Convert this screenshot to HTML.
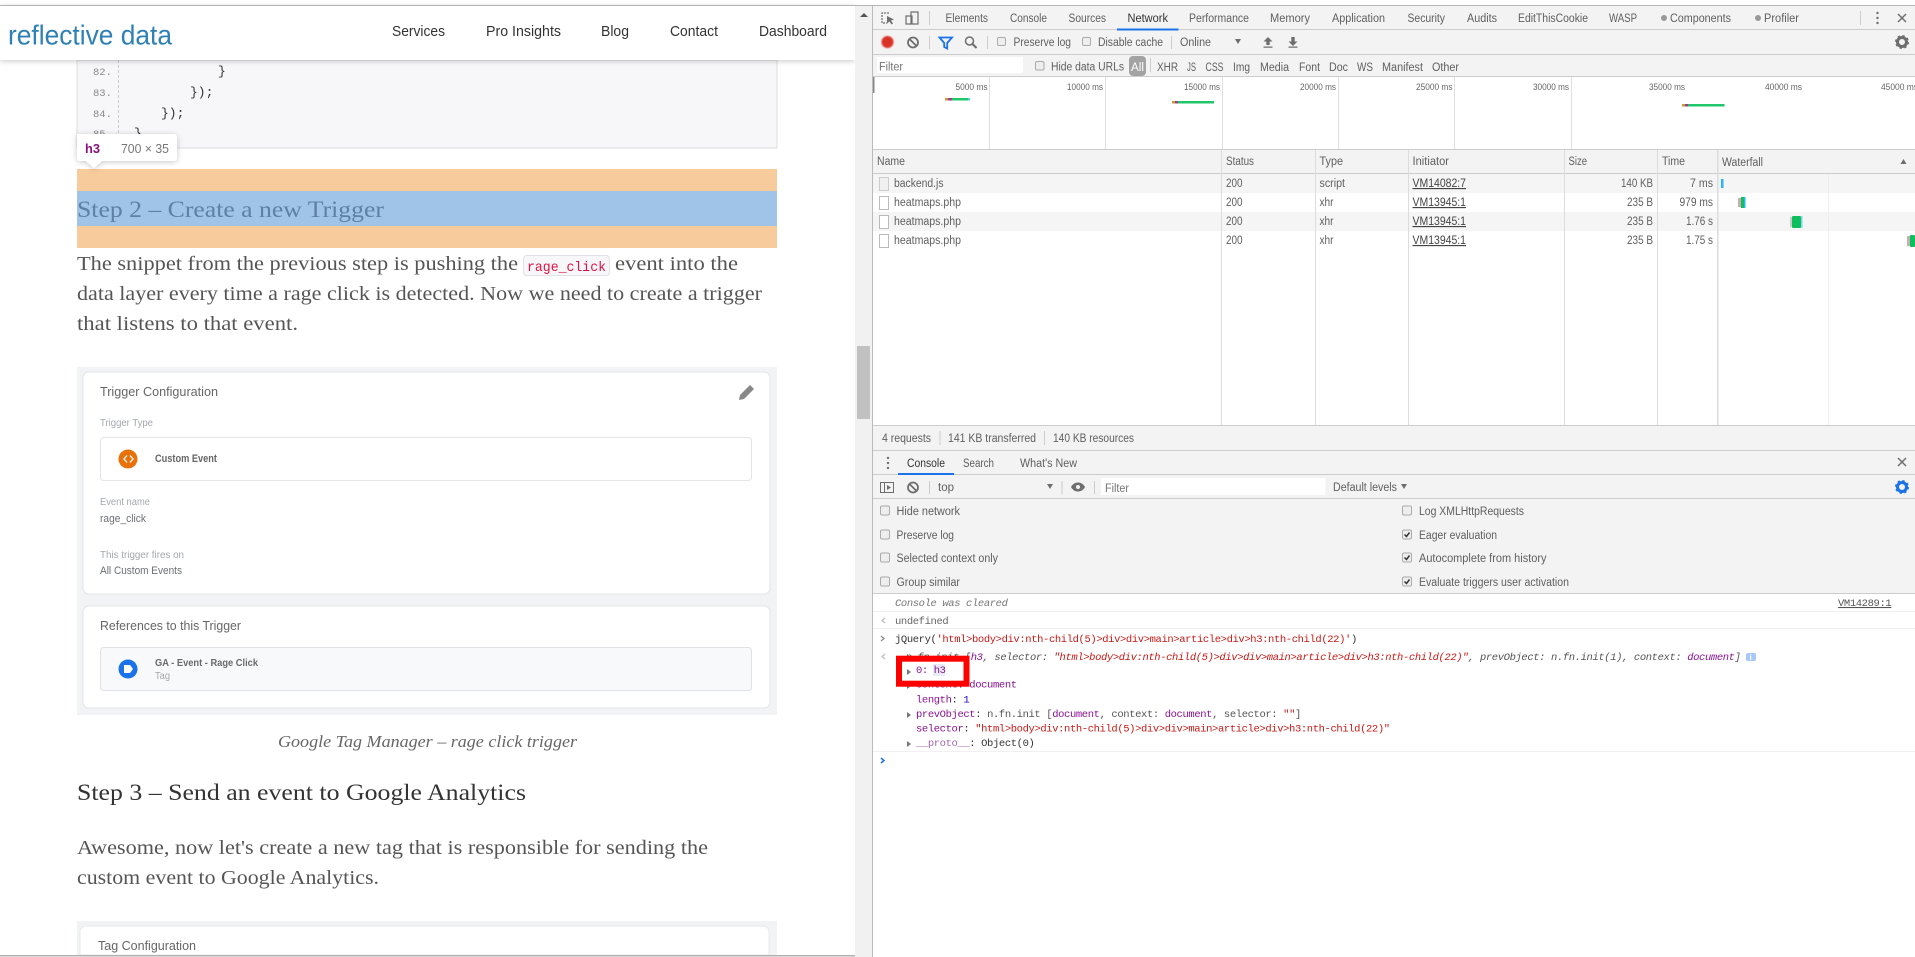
<!DOCTYPE html>
<html><head><meta charset="utf-8"><title>Reflective Data</title>
<style>
html,body{margin:0;padding:0;background:#fff;overflow:hidden}
svg{display:block;font-family:"Liberation Sans",sans-serif;filter:blur(.25px)}
.d{font-size:11.5px;fill:#5f5f5f}
.o{font-size:9.5px;fill:#666}
.s{font-family:"Liberation Serif",serif}
.p{font-family:"Liberation Serif",serif;font-size:20px;fill:#555}
.c{font-size:10px;fill:#a4a8ad}
.e{font-size:11px;fill:#6a6e72}
.m{font-family:"Liberation Mono",monospace;font-size:10.5px;letter-spacing:-.38px;white-space:pre;fill:#333}
.n{font-size:14.5px;fill:#333}
.pu{fill:#881391}.re{fill:#c41a16}.gr{fill:#555}.bl{fill:#1c00cf}
</style></head><body>
<svg width="1915" height="957" viewBox="0 0 1915 957" xmlns="http://www.w3.org/2000/svg">
<defs>
<filter id="sh" x="-10%" y="-30%" width="120%" height="170%"><feDropShadow dx="0" dy="1" stdDeviation="3" flood-color="#000" flood-opacity=".22"/></filter>
<filter id="glow" x="-50%" y="-50%" width="200%" height="200%"><feGaussianBlur stdDeviation=".7"/></filter>
</defs>
<rect width="1915" height="957" fill="#fff"/>

<!-- LEFT PAGE -->
<rect x="77" y="60" width="700" height="88" fill="#f7f7f9" stroke="#dcdcdc"/>
<line x1="118.5" y1="60" x2="118.5" y2="148" stroke="#ccc" stroke-dasharray="3 2"/>
<g font-family="Liberation Mono" font-size="10.5" fill="#8a8a8a">
<text x="93" y="75">82.</text><text x="93" y="96">83.</text><text x="93" y="117">84.</text><text x="93" y="137">85.</text></g>
<g font-family="Liberation Mono" font-size="13" fill="#333">
<text x="218" y="75">}</text><text x="190" y="96">});</text><text x="161" y="117">});</text><text x="134" y="137">}</text></g>

<rect x="77" y="169" width="700" height="79" fill="#f7cb9b"/>
<rect x="77" y="191" width="700" height="35" fill="#9fc4e8"/>
<text class="s" x="77" y="217" font-size="23" fill="#5f7fa5" textLength="307" lengthAdjust="spacingAndGlyphs">Step 2 – Create a new Trigger</text>

<path d="M77 134h97a3 3 0 0 1 3 3v21a3 3 0 0 1-3 3h-72l-8 7-8-7H80a3 3 0 0 1-3-3z" fill="#fff" filter="url(#sh)"/>
<text x="85" y="153" font-size="12.5" font-weight="bold" fill="#881280" textLength="15" lengthAdjust="spacingAndGlyphs">h3</text>
<text x="121" y="153" font-size="12.5" fill="#777" textLength="48" lengthAdjust="spacingAndGlyphs">700 × 35</text>

<text class="p" x="77" y="270" textLength="441" lengthAdjust="spacingAndGlyphs">The snippet from the previous step is pushing the</text>
<rect x="523.5" y="255.5" width="86" height="20" rx="3" fill="#f7f7f9" stroke="#e1e1e8"/>
<text x="527" y="271" font-family="Liberation Mono" font-size="14" fill="#d14" textLength="79" lengthAdjust="spacingAndGlyphs">rage_click</text>
<text class="p" x="615" y="270" textLength="123" lengthAdjust="spacingAndGlyphs">event into the</text>
<text class="p" x="77" y="300" textLength="685" lengthAdjust="spacingAndGlyphs">data layer every time a rage click is detected. Now we need to create a trigger</text>
<text class="p" x="77" y="330" textLength="221" lengthAdjust="spacingAndGlyphs">that listens to that event.</text>

<rect x="77" y="367" width="700" height="348" fill="#f1f3f4"/>
<rect x="83" y="372" width="687" height="222" rx="6" fill="#fff" stroke="#e3e4e6"/>
<rect x="83" y="606" width="687" height="102" rx="6" fill="#fff" stroke="#e3e4e6"/>
<text style="font-size:13px" x="100" y="396" fill="#666" textLength="118" lengthAdjust="spacingAndGlyphs">Trigger Configuration</text>
<path d="M739 400l1-5 10-10 4 4-10 10z" fill="#888"/>
<text class="c" x="100" y="426" textLength="53" lengthAdjust="spacingAndGlyphs">Trigger Type</text>
<rect x="100.5" y="437.5" width="651" height="43" rx="3" fill="#fff" stroke="#e3e4e6"/>
<circle cx="128" cy="459" r="9.5" fill="#e8710a"/>
<path d="M127 455.5l-3 3.5 3 3.5M130 455.5l3 3.5-3 3.5" fill="none" stroke="#fff" stroke-width="1.3"/>
<text x="155" y="462" font-size="11" font-weight="bold" fill="#666" textLength="62" lengthAdjust="spacingAndGlyphs">Custom Event</text>
<text class="c" x="100" y="505" textLength="50" lengthAdjust="spacingAndGlyphs">Event name</text>
<text class="e" x="100" y="522" textLength="46" lengthAdjust="spacingAndGlyphs">rage_click</text>
<text class="c" x="100" y="558" textLength="84" lengthAdjust="spacingAndGlyphs">This trigger fires on</text>
<text class="e" x="100" y="574" textLength="82" lengthAdjust="spacingAndGlyphs">All Custom Events</text>
<text style="font-size:13px" x="100" y="630" fill="#666" textLength="141" lengthAdjust="spacingAndGlyphs">References to this Trigger</text>
<rect x="100.5" y="647.5" width="651" height="43" rx="3" fill="#f8f9fa" stroke="#dfe1e5"/>
<circle cx="128" cy="669" r="9.5" fill="#1a73e8"/>
<path d="M124 665h6l3 4-3 4h-6z" fill="#fff"/>
<text x="155" y="666" font-size="10.5" font-weight="bold" fill="#6a6a6a" textLength="103" lengthAdjust="spacingAndGlyphs">GA - Event - Rage Click</text>
<text class="c" x="155" y="679" textLength="15" lengthAdjust="spacingAndGlyphs">Tag</text>

<text class="s" x="278" y="747" font-size="17" font-style="italic" fill="#666" textLength="299" lengthAdjust="spacingAndGlyphs">Google Tag Manager – rage click trigger</text>
<text class="s" x="77" y="800" font-size="23" fill="#333" textLength="449" lengthAdjust="spacingAndGlyphs">Step 3 – Send an event to Google Analytics</text>
<text class="p" x="77" y="854" textLength="631" lengthAdjust="spacingAndGlyphs">Awesome, now let's create a new tag that is responsible for sending the</text>
<text class="p" x="77" y="884" textLength="302" lengthAdjust="spacingAndGlyphs">custom event to Google Analytics.</text>

<rect x="77" y="921" width="700" height="34" fill="#f1f3f4"/>
<path d="M80 955v-23a6 6 0 0 1 6-6h677a6 6 0 0 1 6 6v23z" fill="#fff" stroke="#e8e9eb"/>
<text style="font-size:13px" x="98" y="950" fill="#666" textLength="98" lengthAdjust="spacingAndGlyphs">Tag Configuration</text>

<!-- Header -->
<rect x="0" y="6" width="855" height="54" fill="#fff" filter="url(#sh)"/>
<text x="8" y="44.5" font-size="28" fill="#2f80b4" textLength="164" lengthAdjust="spacingAndGlyphs">reflective data</text>
<text class="n" x="392" y="36" textLength="53" lengthAdjust="spacingAndGlyphs">Services</text>
<text class="n" x="486" y="36" textLength="75" lengthAdjust="spacingAndGlyphs">Pro Insights</text>
<text class="n" x="601" y="36" textLength="28" lengthAdjust="spacingAndGlyphs">Blog</text>
<text class="n" x="670" y="36" textLength="48" lengthAdjust="spacingAndGlyphs">Contact</text>
<text class="n" x="759" y="36" textLength="68" lengthAdjust="spacingAndGlyphs">Dashboard</text>

<!-- Scrollbar -->
<rect x="855" y="6" width="17" height="951" fill="#f1f1f1"/>
<path d="M860 17l4-4 4 4z" fill="#555"/>
<rect x="857" y="346" width="13" height="73" fill="#c1c1c1"/>
<rect x="0" y="955" width="855" height="1.500" fill="#b0b0b0"/>

<!-- DEVTOOLS backgrounds -->
<rect x="873" y="6" width="1042" height="951" fill="#fff"/>
<rect x="873" y="6" width="1042" height="71" fill="#f3f3f3"/>
<rect x="0" y="5" width="1915" height="1" fill="#b5b5b5"/>
<rect x="872" y="6" width="1" height="951" fill="#bbb"/>
<g fill="#ccc">
<rect x="873" y="29" width="1042" height="1"/><rect x="873" y="54" width="1042" height="1"/><rect x="873" y="76" width="1042" height="1"/><rect x="873" y="149" width="1042" height="1"/>
</g>
<rect x="1117" y="28.500" width="61.500" height="2" fill="#1a73e8"/>

<!-- tab icons -->
<path d="M889 13h-7v10h5" fill="none" stroke="#6e6e6e" stroke-width="1.200" stroke-dasharray="2 1"/>
<path d="M887 16l7 3.500-3 1 2 3-1.500 1-2-3-2.500 2z" fill="#6e6e6e"/>
<path d="M911 12h7v12h-7zM906 16h6v8h-6z" fill="#f3f3f3" stroke="#6e6e6e" stroke-width="1.200"/>
<rect x="929" y="11" width="1" height="14" fill="#ccc"/>
<text class="d" x="945.500" y="22" textLength="42.500" lengthAdjust="spacingAndGlyphs">Elements</text>
<text class="d" x="1010" y="22" textLength="37" lengthAdjust="spacingAndGlyphs">Console</text>
<text class="d" x="1068.500" y="22" textLength="37.500" lengthAdjust="spacingAndGlyphs">Sources</text>
<text class="d" x="1127.500" y="22" textLength="40.500" lengthAdjust="spacingAndGlyphs" style="fill:#333">Network</text>
<text class="d" x="1189" y="22" textLength="60" lengthAdjust="spacingAndGlyphs">Performance</text>
<text class="d" x="1270" y="22" textLength="40" lengthAdjust="spacingAndGlyphs">Memory</text>
<text class="d" x="1332" y="22" textLength="53" lengthAdjust="spacingAndGlyphs">Application</text>
<text class="d" x="1407.500" y="22" textLength="37.500" lengthAdjust="spacingAndGlyphs">Security</text>
<text class="d" x="1467" y="22" textLength="30" lengthAdjust="spacingAndGlyphs">Audits</text>
<text class="d" x="1518" y="22" textLength="70" lengthAdjust="spacingAndGlyphs">EditThisCookie</text>
<text class="d" x="1609" y="22" textLength="28" lengthAdjust="spacingAndGlyphs">WASP</text>
<circle cx="1664" cy="18" r="3" fill="#999"/>
<text class="d" x="1670" y="22" textLength="61" lengthAdjust="spacingAndGlyphs">Components</text>
<circle cx="1758" cy="18" r="3" fill="#999"/>
<text class="d" x="1764" y="22" textLength="35" lengthAdjust="spacingAndGlyphs">Profiler</text>
<rect x="1860" y="11" width="1" height="14" fill="#ccc"/>
<g fill="#6e6e6e"><circle cx="1877.500" cy="13" r="1.200"/><circle cx="1877.500" cy="18" r="1.200"/><circle cx="1877.500" cy="23" r="1.200"/></g>
<path d="M1898 14l8 8M1906 14l-8 8" stroke="#6e6e6e" stroke-width="1.500" fill="none"/>

<!-- row 2 -->
<circle cx="887.500" cy="42" r="6" fill="#d93025" filter="url(#glow)"/>
<circle cx="913" cy="42.500" r="5" fill="none" stroke="#6e6e6e" stroke-width="1.800"/><path d="M909.500 39l7 7" stroke="#6e6e6e" stroke-width="1.800"/>
<rect x="929" y="36" width="1" height="13" fill="#ccc"/>
<path d="M939.500 37.500h12.500l-4.800 5.500v5.500l-3-1.500v-4z" fill="none" stroke="#1a73e8" stroke-width="1.800"/>
<circle cx="969.500" cy="41" r="4" fill="none" stroke="#6e6e6e" stroke-width="1.500"/><path d="M972.500 44l4 4" stroke="#6e6e6e" stroke-width="2"/>
<rect x="987" y="36" width="1" height="13" fill="#ccc"/>
<rect x="997.500" y="37.500" width="8" height="8" rx="1.500" fill="#eee" stroke="#aaa"/>
<text class="d" x="1013.500" y="46" textLength="57.500" lengthAdjust="spacingAndGlyphs">Preserve log</text>
<rect x="1082.500" y="37.500" width="8" height="8" rx="1.500" fill="#eee" stroke="#aaa"/>
<text class="d" x="1098" y="46" textLength="65" lengthAdjust="spacingAndGlyphs">Disable cache</text>
<rect x="1171" y="36" width="1" height="13" fill="#ccc"/>
<text class="d" x="1180" y="46" textLength="31" lengthAdjust="spacingAndGlyphs">Online</text>
<path d="M1235 39h6l-3 5z" fill="#6e6e6e"/>
<path d="M1268 37l-4.500 4.500h2.800v3.500h3.400v-3.500h2.800zM1263.500 46.500h9v1.200h-9z" fill="#6e6e6e"/>
<path d="M1293 46l-4.500-4.500h2.800V37h3.400v4.500h2.800zM1288.500 46.500h9v1.200h-9z" fill="#6e6e6e"/>
<circle cx="1902" cy="42" r="4.500" fill="none" stroke="#6e6e6e" stroke-width="3"/><circle cx="1902" cy="42" r="6.200" fill="none" stroke="#6e6e6e" stroke-width="1.600" stroke-dasharray="2.400 2.500"/>

<!-- row 3 -->
<rect x="877" y="57" width="146" height="16" fill="#fff"/>
<text class="d" x="879" y="70.500" textLength="24" lengthAdjust="spacingAndGlyphs" style="fill:#757575">Filter</text>
<rect x="1035.500" y="61.500" width="8.500" height="8.500" rx="1.500" fill="#eee" stroke="#aaa"/>
<text class="d" x="1051" y="70.500" textLength="73" lengthAdjust="spacingAndGlyphs">Hide data URLs</text>
<rect x="1129" y="56" width="17" height="20" rx="4" fill="#a3a3a3"/>
<text class="d" x="1131" y="71" textLength="13" lengthAdjust="spacingAndGlyphs" style="fill:#fff">All</text>
<rect x="1150" y="58" width="1" height="14" fill="#ccc"/>
<text class="d" x="1157" y="71" textLength="21" lengthAdjust="spacingAndGlyphs">XHR</text>
<text class="d" x="1187" y="71" textLength="9" lengthAdjust="spacingAndGlyphs">JS</text>
<text class="d" x="1205.500" y="71" textLength="18" lengthAdjust="spacingAndGlyphs">CSS</text>
<text class="d" x="1233" y="71" textLength="17" lengthAdjust="spacingAndGlyphs">Img</text>
<text class="d" x="1260" y="71" textLength="29" lengthAdjust="spacingAndGlyphs">Media</text>
<text class="d" x="1299" y="71" textLength="21" lengthAdjust="spacingAndGlyphs">Font</text>
<text class="d" x="1329" y="71" textLength="19" lengthAdjust="spacingAndGlyphs">Doc</text>
<text class="d" x="1357" y="71" textLength="16" lengthAdjust="spacingAndGlyphs">WS</text>
<text class="d" x="1382" y="71" textLength="41" lengthAdjust="spacingAndGlyphs">Manifest</text>
<text class="d" x="1432" y="71" textLength="27" lengthAdjust="spacingAndGlyphs">Other</text>

<!-- overview -->
<rect x="873" y="77" width="1.500" height="16" fill="#888"/>
<g fill="#e0e0e0">
<rect x="989" y="77" width="1" height="72"/><rect x="1105" y="77" width="1" height="72"/><rect x="1222" y="77" width="1" height="72"/><rect x="1338" y="77" width="1" height="72"/><rect x="1454" y="77" width="1" height="72"/><rect x="1571" y="77" width="1" height="72"/>
</g>
<text class="o" x="955.500" y="90" textLength="32" lengthAdjust="spacingAndGlyphs">5000 ms</text>
<text class="o" x="1067" y="90" textLength="36" lengthAdjust="spacingAndGlyphs">10000 ms</text>
<text class="o" x="1184" y="90" textLength="36" lengthAdjust="spacingAndGlyphs">15000 ms</text>
<text class="o" x="1300" y="90" textLength="36" lengthAdjust="spacingAndGlyphs">20000 ms</text>
<text class="o" x="1416" y="90" textLength="36.500" lengthAdjust="spacingAndGlyphs">25000 ms</text>
<text class="o" x="1533" y="90" textLength="36" lengthAdjust="spacingAndGlyphs">30000 ms</text>
<text class="o" x="1649" y="90" textLength="36" lengthAdjust="spacingAndGlyphs">35000 ms</text>
<text class="o" x="1765" y="90" textLength="37" lengthAdjust="spacingAndGlyphs">40000 ms</text>
<text class="o" x="1881" y="90" textLength="37" lengthAdjust="spacingAndGlyphs">45000 ms</text>
<rect x="945" y="98" width="25" height="2.500" fill="#1fc76a"/><rect x="945" y="98" width="3" height="2.500" fill="#c9a02c"/><rect x="948" y="98" width="4" height="2.500" fill="#a03a9a"/><rect x="968" y="98" width="2" height="2.500" fill="#4dd0d8"/>
<rect x="1172" y="101" width="42" height="2.500" fill="#1fc76a"/><rect x="1172" y="101" width="3" height="2.500" fill="#c9a02c"/><rect x="1175" y="101" width="3" height="2.500" fill="#a03a9a"/>
<rect x="1682" y="104" width="42.500" height="2.500" fill="#1fc76a"/><rect x="1682" y="104" width="3" height="2.500" fill="#c9a02c"/><rect x="1685" y="104" width="3" height="2.500" fill="#a03a9a"/>

<!-- table -->
<rect x="873" y="150" width="1042" height="23" fill="#f3f3f3"/>
<rect x="873" y="173" width="1042" height="1" fill="#ccc"/>
<rect x="873" y="174" width="1042" height="19" fill="#f5f5f5"/>
<rect x="873" y="212" width="1042" height="19" fill="#f5f5f5"/>
<g fill="#dcdcdc">
<rect x="1221" y="150" width="1" height="275"/><rect x="1315" y="150" width="1" height="275"/><rect x="1408" y="150" width="1" height="275"/><rect x="1564" y="150" width="1" height="275"/><rect x="1657" y="150" width="1" height="275"/><rect x="1717" y="150" width="1.500" height="275"/>
</g>
<rect x="1828" y="174" width="1" height="251" fill="#eee"/>
<text class="d" x="877" y="165" textLength="28" lengthAdjust="spacingAndGlyphs">Name</text>
<text class="d" x="1226" y="165" textLength="28" lengthAdjust="spacingAndGlyphs">Status</text>
<text class="d" x="1319.500" y="165" textLength="23.500" lengthAdjust="spacingAndGlyphs">Type</text>
<text class="d" x="1412.500" y="165" textLength="36.500" lengthAdjust="spacingAndGlyphs">Initiator</text>
<text class="d" x="1568.500" y="165" textLength="18.500" lengthAdjust="spacingAndGlyphs">Size</text>
<text class="d" x="1662" y="165" textLength="23" lengthAdjust="spacingAndGlyphs">Time</text>
<text class="d" x="1722" y="166" textLength="41" lengthAdjust="spacingAndGlyphs">Waterfall</text>
<path d="M1900.500 164l3-5 3 5z" fill="#6e6e6e"/>

<rect x="879.500" y="177.500" width="9" height="13" fill="#f0f0f0" stroke="#ccc"/>
<rect x="879.500" y="196.500" width="9" height="13" fill="#fff" stroke="#bbb"/>
<rect x="879.500" y="215.500" width="9" height="13" fill="#fff" stroke="#bbb"/>
<rect x="879.500" y="234.500" width="9" height="13" fill="#fff" stroke="#bbb"/>
<text class="d" x="894" y="187" textLength="49.500" lengthAdjust="spacingAndGlyphs">backend.js</text>
<text class="d" x="894" y="206" textLength="67" lengthAdjust="spacingAndGlyphs">heatmaps.php</text>
<text class="d" x="894" y="225" textLength="67" lengthAdjust="spacingAndGlyphs">heatmaps.php</text>
<text class="d" x="894" y="244" textLength="67" lengthAdjust="spacingAndGlyphs">heatmaps.php</text>
<text class="d" x="1226" y="187" textLength="16.500" lengthAdjust="spacingAndGlyphs">200</text>
<text class="d" x="1226" y="206" textLength="16.500" lengthAdjust="spacingAndGlyphs">200</text>
<text class="d" x="1226" y="225" textLength="16.500" lengthAdjust="spacingAndGlyphs">200</text>
<text class="d" x="1226" y="244" textLength="16.500" lengthAdjust="spacingAndGlyphs">200</text>
<text class="d" x="1319.500" y="187" textLength="25.500" lengthAdjust="spacingAndGlyphs">script</text>
<text class="d" x="1319.500" y="206" textLength="14" lengthAdjust="spacingAndGlyphs">xhr</text>
<text class="d" x="1319.500" y="225" textLength="14" lengthAdjust="spacingAndGlyphs">xhr</text>
<text class="d" x="1319.500" y="244" textLength="14" lengthAdjust="spacingAndGlyphs">xhr</text>
<text class="d" x="1412.500" y="187" textLength="53.500" lengthAdjust="spacingAndGlyphs" text-decoration="underline" style="fill:#444">VM14082:7</text>
<text class="d" x="1412.500" y="206" textLength="53.500" lengthAdjust="spacingAndGlyphs" text-decoration="underline" style="fill:#444">VM13945:1</text>
<text class="d" x="1412.500" y="225" textLength="53.500" lengthAdjust="spacingAndGlyphs" text-decoration="underline" style="fill:#444">VM13945:1</text>
<text class="d" x="1412.500" y="244" textLength="53.500" lengthAdjust="spacingAndGlyphs" text-decoration="underline" style="fill:#444">VM13945:1</text>
<text class="d" x="1621" y="187" textLength="32" lengthAdjust="spacingAndGlyphs">140 KB</text>
<text class="d" x="1627" y="206" textLength="26" lengthAdjust="spacingAndGlyphs">235 B</text>
<text class="d" x="1627" y="225" textLength="26" lengthAdjust="spacingAndGlyphs">235 B</text>
<text class="d" x="1627" y="244" textLength="26" lengthAdjust="spacingAndGlyphs">235 B</text>
<text class="d" x="1690" y="187" textLength="23" lengthAdjust="spacingAndGlyphs">7 ms</text>
<text class="d" x="1679.500" y="206" textLength="33.500" lengthAdjust="spacingAndGlyphs">979 ms</text>
<text class="d" x="1686" y="225" textLength="27" lengthAdjust="spacingAndGlyphs">1.76 s</text>
<text class="d" x="1686" y="244" textLength="27" lengthAdjust="spacingAndGlyphs">1.75 s</text>
<rect x="1721" y="179" width="2.500" height="9" fill="#29b6f6"/>
<rect x="1738" y="198" width="3" height="9" fill="#c4b0aa"/><rect x="1741" y="197" width="3" height="11" fill="#0fbf5e"/><rect x="1744" y="197" width="1.500" height="11" fill="#29b6f6"/>
<rect x="1790" y="217" width="2" height="10" fill="#ccc"/><rect x="1792" y="216" width="9" height="12" rx="1" fill="#0fbf5e"/><rect x="1801" y="216" width="1.500" height="12" fill="#7fd4f0"/>
<rect x="1907" y="236" width="3" height="10" fill="#c4b0aa"/><rect x="1910" y="235" width="5" height="12" rx="1" fill="#0fbf5e"/>

<!-- status bar -->
<rect x="873" y="425" width="1042" height="168" fill="#f3f3f3"/>
<rect x="873" y="425" width="1042" height="1" fill="#ccc"/>
<rect x="873" y="450" width="1042" height="1" fill="#ccc"/>
<rect x="873" y="474" width="1042" height="1" fill="#ccc"/>
<rect x="873" y="498" width="1042" height="1" fill="#ccc"/>
<rect x="873" y="593" width="1042" height="1" fill="#ccc"/>
<text class="d" x="882" y="442" textLength="49" lengthAdjust="spacingAndGlyphs">4 requests</text>
<rect x="939.500" y="431" width="1" height="14" fill="#ccc"/>
<text class="d" x="948" y="442" textLength="88" lengthAdjust="spacingAndGlyphs">141 KB transferred</text>
<rect x="1044" y="431" width="1" height="14" fill="#ccc"/>
<text class="d" x="1053" y="442" textLength="81" lengthAdjust="spacingAndGlyphs">140 KB resources</text>

<!-- drawer tabs -->
<g fill="#6e6e6e"><circle cx="888" cy="458" r="1.200"/><circle cx="888" cy="463" r="1.200"/><circle cx="888" cy="468" r="1.200"/></g>
<text class="d" x="907" y="467" textLength="38" lengthAdjust="spacingAndGlyphs" style="fill:#333">Console</text>
<rect x="898" y="473" width="56" height="2" fill="#1a73e8"/>
<text class="d" x="963" y="467" textLength="31" lengthAdjust="spacingAndGlyphs">Search</text>
<text class="d" x="1020" y="467" textLength="57" lengthAdjust="spacingAndGlyphs">What's New</text>
<path d="M1898 458l8 8M1906 458l-8 8" stroke="#6e6e6e" stroke-width="1.500" fill="none"/>

<!-- console toolbar -->
<rect x="880.500" y="482.500" width="13" height="10" fill="none" stroke="#6e6e6e"/><path d="M884.500 483v9" stroke="#6e6e6e"/><path d="M887 485l4 2.500-4 2.500z" fill="#6e6e6e"/>
<circle cx="913" cy="487.500" r="5" fill="none" stroke="#6e6e6e" stroke-width="1.800"/><path d="M909.500 484l7 7" stroke="#6e6e6e" stroke-width="1.800"/>
<rect x="929" y="481" width="1" height="13" fill="#ccc"/>
<text class="d" x="938" y="491" textLength="16" lengthAdjust="spacingAndGlyphs">top</text>
<path d="M1047 484h6l-3 5z" fill="#6e6e6e"/>
<rect x="1061.500" y="481" width="1" height="13" fill="#ccc"/>
<path d="M1071 487c2-3.500 4.500-4.500 7-4.500s5 1 7 4.500c-2 3.500-4.500 4.500-7 4.500s-5-1-7-4.500z" fill="#6e6e6e"/><circle cx="1078" cy="487" r="2" fill="#f3f3f3"/>
<rect x="1094" y="481" width="1" height="13" fill="#ccc"/>
<rect x="1101" y="478" width="224.500" height="17" fill="#fff"/>
<text class="d" x="1105" y="492" textLength="24" lengthAdjust="spacingAndGlyphs" style="fill:#757575">Filter</text>
<text class="d" x="1333" y="491" textLength="64" lengthAdjust="spacingAndGlyphs">Default levels</text>
<path d="M1401 484h6l-3 5z" fill="#6e6e6e"/>
<circle cx="1902" cy="487" r="4.500" fill="none" stroke="#1a73e8" stroke-width="3"/><circle cx="1902" cy="487" r="6.200" fill="none" stroke="#1a73e8" stroke-width="1.600" stroke-dasharray="2.400 2.500"/>

<!-- console settings -->
<g fill="#eee" stroke="#aaa">
<rect x="880.500" y="506" width="9" height="9" rx="1.500"/><rect x="880.500" y="530" width="9" height="9" rx="1.500"/><rect x="880.500" y="553" width="9" height="9" rx="1.500"/><rect x="880.500" y="577" width="9" height="9" rx="1.500"/>
<rect x="1402.500" y="506" width="9" height="9" rx="1.500"/><rect x="1402.500" y="530" width="9" height="9" rx="1.500"/><rect x="1402.500" y="553" width="9" height="9" rx="1.500"/><rect x="1402.500" y="577" width="9" height="9" rx="1.500"/>
</g>
<path d="M1404.500 534.500l2 2 3-4M1404.500 557.500l2 2 3-4M1404.500 581.500l2 2 3-4" fill="none" stroke="#333" stroke-width="1.500"/>
<text class="d" x="896.500" y="515" textLength="63.500" lengthAdjust="spacingAndGlyphs">Hide network</text>
<text class="d" x="896.500" y="539" textLength="57.500" lengthAdjust="spacingAndGlyphs">Preserve log</text>
<text class="d" x="896.500" y="562" textLength="101.500" lengthAdjust="spacingAndGlyphs">Selected context only</text>
<text class="d" x="896.500" y="586" textLength="63.500" lengthAdjust="spacingAndGlyphs">Group similar</text>
<text class="d" x="1419" y="515" textLength="105" lengthAdjust="spacingAndGlyphs">Log XMLHttpRequests</text>
<text class="d" x="1419" y="539" textLength="78" lengthAdjust="spacingAndGlyphs">Eager evaluation</text>
<text class="d" x="1419" y="562" textLength="127.500" lengthAdjust="spacingAndGlyphs">Autocomplete from history</text>
<text class="d" x="1419" y="586" textLength="150" lengthAdjust="spacingAndGlyphs">Evaluate triggers user activation</text>

<!-- console -->
<text class="m" x="895" y="606" font-style="italic" style="fill:#777">Console was cleared</text>
<text class="m" x="1838" y="606" text-decoration="underline" style="fill:#555">VM14289:1</text>
<rect x="873" y="611" width="1042" height="1" fill="#f0f0f0"/>
<path d="M885 618l-3 2.500 3 2.500" fill="none" stroke="#bbb" stroke-width="1.200"/>
<text class="m" x="895" y="624" style="fill:#666">undefined</text>
<rect x="873" y="628" width="1042" height="1" fill="#f0f0f0"/>
<path d="M881 636l3 2.500-3 2.500" fill="none" stroke="#888" stroke-width="1.200"/>
<text class="m" x="895" y="642">jQuery(<tspan class="re">'html&gt;body&gt;div:nth-child(5)&gt;div&gt;div&gt;main&gt;article&gt;div&gt;h3:nth-child(22)'</tspan>)</text>
<path d="M885 654l-3 2.500 3 2.500" fill="none" stroke="#bbb" stroke-width="1.200"/>
<text class="m" x="905.600" y="660" font-style="italic" style="fill:#555">n.fn.init [<tspan class="pu">h3</tspan>, selector: <tspan class="re">"html&gt;body&gt;div:nth-child(5)&gt;div&gt;div&gt;main&gt;article&gt;div&gt;h3:nth-child(22)"</tspan>, prevObject: n.fn.init(1), context: <tspan class="pu">document</tspan>]</text>
<rect x="1746" y="653" width="10" height="8" rx="2" fill="#a8c7fa"/><text x="1749.500" y="660" font-size="8" font-weight="bold" fill="#fff">i</text>

<rect x="933" y="664" width="12" height="12" fill="#e8eaf6"/>
<path d="M907 669l4 3-4 3z" fill="#777"/>
<text class="m" x="916" y="673"><tspan class="pu">0</tspan><tspan class="pu">:</tspan> <tspan class="pu">h3</tspan></text>
<path d="M907 683l4 3-4 3z" fill="#777"/>
<text class="m" x="916" y="687.500"><tspan class="pu">context</tspan>: <tspan class="pu">document</tspan></text>
<text class="m" x="916" y="702.500"><tspan class="pu">length</tspan>: <tspan class="bl">1</tspan></text>
<path d="M907 712l4 3-4 3z" fill="#777"/>
<text class="m" x="916" y="717"><tspan class="pu">prevObject</tspan>: <tspan class="gr">n.fn.init [</tspan><tspan class="pu">document</tspan><tspan class="gr">, context: </tspan><tspan class="pu">document</tspan><tspan class="gr">, selector: </tspan><tspan class="re">""</tspan><tspan class="gr">]</tspan></text>
<text class="m" x="916" y="731.500"><tspan class="pu">selector</tspan>: <tspan class="re">"html&gt;body&gt;div:nth-child(5)&gt;div&gt;div&gt;main&gt;article&gt;div&gt;h3:nth-child(22)"</tspan></text>
<path d="M907 741l4 3-4 3z" fill="#777"/>
<text class="m" x="916" y="746"><tspan fill="#a566ad">__proto__</tspan>: Object(0)</text>
<rect x="873" y="751" width="1042" height="1" fill="#f0f0f0"/>
<path d="M881 758l3 2.500-3 2.500" fill="none" stroke="#1a73e8" stroke-width="1.500"/>

<!-- annotation -->
<rect x="899" y="658.700" width="67.500" height="25" fill="none" stroke="#f00" stroke-width="6"/>
</svg>
</body></html>
